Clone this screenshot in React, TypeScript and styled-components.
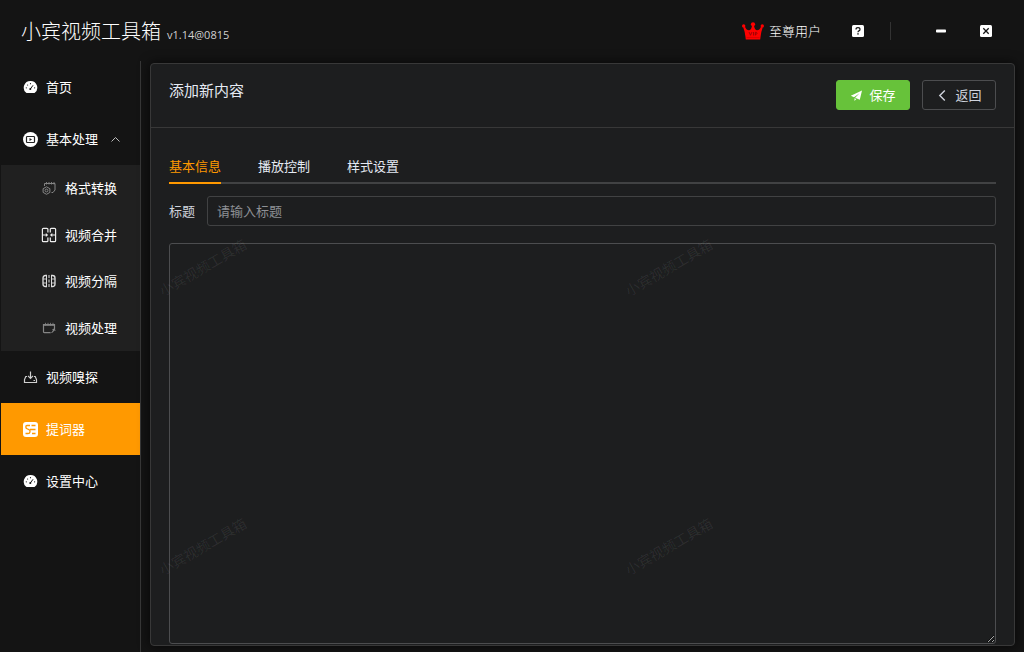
import React from 'react';
import styled, { createGlobalStyle, css } from 'styled-components';

const GlobalStyle = createGlobalStyle`
  *, *::before, *::after { box-sizing: border-box; }
  html { color-scheme: dark; }
  body {
    margin: 0;
    background: #141414;
    color: #fff;
    font-family: "Open Sans", "Noto Sans CJK SC", sans-serif;
    font-size: 13px;
    line-height: 20px;
  }
  button, input, textarea { font: inherit; color: inherit; }
  button { cursor: pointer; }
  svg { display: block; flex: none; }
`;

const Shell = styled.div`
  display: flex;
  flex-direction: column;
  height: 100vh;
`;

const TitleBar = styled.header`
  display: flex;
  align-items: center;
  justify-content: space-between;
  flex: none;
  height: 61px;
  padding: 0 32px 0 21px;
`;

const Brand = styled.div`
  display: flex;
  align-items: baseline;
  gap: 6px;
  padding-top: 3px;
`;

const BrandName = styled.h1`
  margin: 0;
  font-size: 20px;
  font-weight: 300;
  line-height: 28px;
`;

const Version = styled.span`
  font-size: 11px;
  color: #d0d0d0;
`;

const WindowTools = styled.div`
  display: flex;
  align-items: center;
`;

const UserBadge = styled.a`
  display: flex;
  align-items: center;
  gap: 5px;
  margin-right: 31px;
  color: #fff;
  font-weight: 300;
  text-decoration: none;
`;

const ToolDivider = styled.span`
  width: 1px;
  height: 18px;
  margin: 0 45px 0 26px;
  background: #333;
`;

const IconButton = styled.button`
  padding: 0;
  border: 0;
  background: none;
  & + & { margin-left: 34px; }
`;

const Workspace = styled.div`
  display: flex;
  flex: 1;
  min-height: 0;
`;

const Sidebar = styled.nav`
  flex: none;
  width: 141px;
  padding-left: 1px;
  border-right: 1px solid #383838;
`;

const MenuItem = styled.a<{ $active?: boolean }>`
  display: flex;
  align-items: center;
  gap: 8px;
  height: 52px;
  padding-left: 22px;
  color: #fff;
  text-decoration: none;
  ${(p) => p.$active && css`background: #ff9900;`}
  & > svg:last-child:not(:first-child) { margin-left: 4px; }
`;

const SubMenu = styled.div`
  display: flex;
  flex-direction: column;
  height: 186px;
  background: #202020;
`;

const SubItem = styled.a`
  display: flex;
  align-items: center;
  flex: 1;
  gap: 8px;
  padding-left: 40px;
  color: #fff;
  text-decoration: none;
`;

const Panel = styled.main`
  display: flex;
  flex-direction: column;
  flex: 1;
  min-width: 0;
  margin: 2px 9px 6px;
  border: 1px solid #383838;
  border-radius: 4px;
  background: #1d1e1f;
  box-shadow: 0 0 12px rgba(0, 0, 0, 0.72);
`;

const PanelHeader = styled.div`
  display: flex;
  justify-content: space-between;
  align-items: flex-start;
  padding: 16px 18px 17px;
  border-bottom: 1px solid #383838;
`;

const PanelTitle = styled.h2`
  margin: 0;
  color: #e5eaf3;
  font-size: 15px;
  font-weight: 400;
  line-height: 20px;
`;

const Actions = styled.div`
  display: flex;
  gap: 12px;
`;

const ActionButton = styled.button<{ $primary?: boolean }>`
  display: flex;
  align-items: center;
  justify-content: center;
  gap: 6px;
  width: 74px;
  height: 30px;
  padding: 0;
  border: 1px solid ${(p) => (p.$primary ? '#67c23a' : '#4c4d4f')};
  border-radius: 3px;
  background: ${(p) => (p.$primary ? '#67c23a' : 'transparent')};
  color: ${(p) => (p.$primary ? '#fff' : '#cfd3dc')};
`;

const PanelBody = styled.div`
  position: relative;
  display: flex;
  flex-direction: column;
  flex: 1;
  min-height: 0;
  padding: 20px 18px 1px;
`;

const Tabs = styled.div`
  display: flex;
  flex: none;
  gap: 37px;
  height: 36px;
  box-shadow: inset 0 -2px #414243;
`;

const Tab = styled.button<{ $active?: boolean }>`
  padding: 2px 0 0;
  border: 0;
  border-bottom: 2px solid ${(p) => (p.$active ? '#ff9900' : 'transparent')};
  background: none;
  color: ${(p) => (p.$active ? '#ff9900' : '#e5eaf3')};
`;

const Field = styled.div`
  display: flex;
  align-items: center;
  gap: 12px;
  margin: 12px 0 17px;
`;

const FieldLabel = styled.label`
  color: #cfd3dc;
`;

const TextInput = styled.input`
  flex: 1;
  min-width: 0;
  height: 30px;
  padding: 0 9px;
  border: 1px solid #414243;
  border-radius: 3px;
  background: transparent;
  outline: none;
  &::placeholder { color: #8d9095; opacity: 1; }
`;

const ScriptArea = styled.textarea`
  flex: 1;
  width: 100%;
  min-height: 0;
  padding: 5px 10px;
  border: 1px solid #4c4d4f;
  border-radius: 3px;
  background: transparent;
  outline: none;
  resize: vertical;
`;

const WatermarkLayer = styled.div`
  position: absolute;
  inset: 0;
  display: grid;
  grid-template-columns: repeat(2, 466px);
  grid-auto-rows: 279px;
  overflow: hidden;
  pointer-events: none;
`;

const Watermark = styled.span`
  display: flex;
  align-items: center;
  padding-left: 3px;
  color: rgba(255, 255, 255, 0.07);
  font-size: 14px;
  & > span { transform: rotate(-30deg); }
`;

const GaugeIcon = () => (
  <svg width="15" height="15" viewBox="0 0 15 15">
    <path d="M7.5 1A6.6 6.6 0 0 0 3.2 12.7Q3.6 13 4 13H11Q11.4 13 11.8 12.7A6.6 6.6 0 0 0 7.5 1Z" fill="#fff" />
    <path d="M7.3 9 9.8 5.6" stroke="#141414" strokeWidth="1" strokeLinecap="round" />
    <g fill="#141414">
      <circle cx="7.3" cy="9" r="1" /><circle cx="3.3" cy="7.8" r=".6" />
      <circle cx="4.6" cy="5" r=".6" /><circle cx="7.5" cy="3.7" r=".6" /><circle cx="11.6" cy="7.8" r=".6" />
    </g>
  </svg>
);

const FilmDiscIcon = () => (
  <svg width="15" height="15" viewBox="0 0 15 15">
    <circle cx="7.5" cy="7.5" r="7.5" fill="#fff" />
    <rect x="3.500" y="4.500" width="8" height="6" rx=".8" fill="none" stroke="#222" strokeWidth="1.200" />
    <path d="M6.500 6 9 7.500 6.500 9Z" fill="#222" />
  </svg>
);

const ChevronUp = () => (
  <svg width="11" height="11" viewBox="0 0 11 11" fill="none" stroke="#bbb">
    <path d="M1.500 7.500 5.500 3.500 9.500 7.500" />
  </svg>
);

const ConvertIcon = () => (
  <svg width="16" height="16" viewBox="0 0 16 16" fill="none" stroke="#858585">
    <path d="M3.500 6V3.500H14V10L12 12.500H10.500" />
    <path d="M5.500 2V4.500M8 2V4.500M10.500 2V4.500M13 2V4.500" strokeWidth=".9" />
    <path d="m5.500 6.800 3.400 1.900v3.700L5.500 14.300 2.100 12.400V8.700Z" />
    <circle cx="5.500" cy="10.500" r="1.400" />
  </svg>
);

const MergeIcon = () => (
  <svg width="16" height="16" viewBox="0 0 16 16" fill="none" stroke="#eee" strokeWidth="1.200">
    <path d="M6.900 5.500V2.300Q6.900 1.300 5.900 1.300H2.400Q1.400 1.300 1.400 2.300V13.700Q1.400 14.700 2.400 14.700H5.900Q6.900 14.700 6.900 13.700V10.500" />
    <path d="M9.300 5.500V2.300Q9.300 1.300 10.300 1.300H13.600Q14.600 1.300 14.600 2.300V13.700Q14.600 14.700 13.600 14.700H10.300Q9.300 14.700 9.300 13.700V10.500" />
    <path d="M1.400 8H5.500M14.600 8H10.500" />
    <path d="m4.800 6 2.400 2-2.400 2ZM11.300 6 8.900 8l2.400 2Z" fill="#eee" stroke="none" />
  </svg>
);

const SplitIcon = () => (
  <svg width="16" height="16" viewBox="0 0 16 16" fill="none" stroke="#ddd">
    <path d="M6 2.500H4.500Q2 2.500 2 5V11Q2 13.500 4.500 13.500H6M10 2.500H11.500Q14 2.500 14 5V11Q14 13.500 11.500 13.500H10" strokeWidth="1.300" />
    <path d="M5.500 2.500V13.500M10.500 2.500V13.500" />
    <path d="M2 6H5.500M2 10H5.500M10.500 6H14M10.500 10H14" strokeWidth=".9" />
    <path d="M8 2V14" strokeDasharray="3 1.500" />
  </svg>
);

const ProcessIcon = () => (
  <svg width="16" height="16" viewBox="0 0 16 16" fill="none" stroke="#858585">
    <path d="M9.500 12.700H3.500Q2.500 12.700 2.500 11.700V4.500H13.500V9.500" strokeWidth="1.200" />
    <path d="M2.500 5.500H13.500M4.500 2.800V5.500M7 2.800V5.500M9.500 2.800V5.500M12 2.800V5.500" strokeWidth=".8" />
    <path d="M9 13.200Q11.200 12.600 12 10L10.800 9.800 13.500 8.200 14.700 11 13.400 10.600Q12.300 13.200 9 13.200Z" fill="#858585" stroke="none" />
  </svg>
);

const SniffIcon = () => (
  <svg width="15" height="15" viewBox="0 0 15 15" fill="none" stroke="#d0d0d0" strokeWidth="1.200">
    <path d="M7.500 1.500V8M5 5.800 7.500 8.300 10 5.800" />
    <path d="M4 6.500H2.800L1.500 9.500V12.500H13.500V9.500L12.200 6.500H11M10.500 10.500H12" />
  </svg>
);

const PrompterIcon = () => (
  <svg width="15" height="15" viewBox="0 0 15 15" fill="none" stroke="#ff9900" strokeWidth="1.300">
    <rect width="15" height="15" rx="3" fill="#fff" stroke="none" />
    <path d="M7 3.500H4Q2.800 3.500 2.800 5 2.800 6.500 4.500 7L6 7.700Q7.300 8.200 7 9.800 6.700 11.500 5 11.500H2.500" />
    <path d="M8.500 3.500H12.500M7 7.500H12.500M9 11.500H12.500" />
  </svg>
);

const CrownIcon = () => (
  <svg width="22" height="18" viewBox="0 0 22 18" fill="#f00">
    <path d="M3.800 17.500 3.400 14.500Q3 10 1.300 5.500L3 4.800Q4.500 8.500 7.200 8.300 9.500 7.500 10 3.500H12Q12.500 7.500 14.800 8.300 17.500 8.500 19 4.800L20.700 5.500Q19 10 18.600 14.500L18.200 17.500Z" />
    <circle cx="1.700" cy="4" r="1.700" /><circle cx="11" cy="2.300" r="2.100" /><circle cx="20.300" cy="4" r="1.700" />
    <path d="M7 10 8.500 13.300 10 10M11.500 10V13.500M13.300 13.500V10.300H14.500Q15.700 11.300 14.500 12.200H13.300" fill="none" stroke="#8a0505" strokeWidth=".8" />
    <path d="M4.500 15.500H17.500" stroke="#c00000" strokeWidth=".5" />
  </svg>
);

const HelpIcon = () => (
  <svg width="12" height="12" viewBox="0 0 12 12">
    <rect width="12" height="12" rx="1.500" fill="#fff" />
    <path d="M4 4.500Q4 2.700 6 2.700T8 4.400Q8 5.400 6.900 5.900 6 6.300 6 7.200" fill="none" stroke="#141414" strokeWidth="1.200" />
    <rect x="5.300" y="8.200" width="1.400" height="1.400" fill="#141414" />
  </svg>
);

const MinimizeIcon = () => (
  <svg width="10" height="12" viewBox="0 0 10 12"><rect y="4.500" width="10" height="3" rx=".8" fill="#fff" /></svg>
);

const CloseIcon = () => (
  <svg width="12" height="12" viewBox="0 0 12 12">
    <rect width="12" height="12" rx="1.500" fill="#fff" />
    <path d="m3.300 3.300 5.400 5.400M8.700 3.300 3.300 8.700" stroke="#141414" strokeWidth="1.300" />
  </svg>
);

const SendIcon = () => (
  <svg width="13" height="13" viewBox="0 0 13 13" fill="#fff">
    <path d="M12 1.500.800 6.800 4 8.200 9.500 4.300 5.200 8.800 9.800 10.800Z" />
    <path d="M4.500 9.200V12L6.300 10Z" />
  </svg>
);

const BackIcon = () => (
  <svg width="13" height="13" viewBox="0 0 13 13" fill="none" stroke="#cfd3dc" strokeWidth="1.400">
    <path d="M8.800 1.500 3.800 6.500 8.800 11.500" />
  </svg>
);

const subItems = [
  { label: '格式转换', Icon: ConvertIcon },
  { label: '视频合并', Icon: MergeIcon },
  { label: '视频分隔', Icon: SplitIcon },
  { label: '视频处理', Icon: ProcessIcon },
];

const tabs = ['基本信息', '播放控制', '样式设置'];

export default function App() {
  const [tab, setTab] = React.useState(0);
  return (
    <Shell>
      <GlobalStyle />
      <TitleBar>
        <Brand>
          <BrandName>小宾视频工具箱</BrandName>
          <Version>v1.14@0815</Version>
        </Brand>
        <WindowTools>
          <UserBadge href="#user"><CrownIcon />至尊用户</UserBadge>
          <IconButton aria-label="帮助"><HelpIcon /></IconButton>
          <ToolDivider />
          <IconButton aria-label="最小化"><MinimizeIcon /></IconButton>
          <IconButton aria-label="关闭"><CloseIcon /></IconButton>
        </WindowTools>
      </TitleBar>
      <Workspace>
        <Sidebar>
          <MenuItem href="#home"><GaugeIcon />首页</MenuItem>
          <MenuItem href="#basic"><FilmDiscIcon />基本处理<ChevronUp /></MenuItem>
          <SubMenu>
            {subItems.map(({ label, Icon }) => (
              <SubItem key={label} href="#basic"><Icon />{label}</SubItem>
            ))}
          </SubMenu>
          <MenuItem href="#sniff"><SniffIcon />视频嗅探</MenuItem>
          <MenuItem href="#prompter" $active><PrompterIcon />提词器</MenuItem>
          <MenuItem href="#settings"><GaugeIcon />设置中心</MenuItem>
        </Sidebar>
        <Panel>
          <PanelHeader>
            <PanelTitle>添加新内容</PanelTitle>
            <Actions>
              <ActionButton $primary><SendIcon />保存</ActionButton>
              <ActionButton><BackIcon />返回</ActionButton>
            </Actions>
          </PanelHeader>
          <PanelBody>
            <Tabs role="tablist">
              {tabs.map((label, i) => (
                <Tab key={label} role="tab" aria-selected={i === tab} $active={i === tab} onClick={() => setTab(i)}>
                  {label}
                </Tab>
              ))}
            </Tabs>
            <Field>
              <FieldLabel htmlFor="title">标题</FieldLabel>
              <TextInput id="title" placeholder="请输入标题" />
            </Field>
            <ScriptArea aria-label="内容" />
            <WatermarkLayer aria-hidden="true">
              {[0, 1, 2, 3].map((n) => (
                <Watermark key={n}><span>小宾视频工具箱</span></Watermark>
              ))}
            </WatermarkLayer>
          </PanelBody>
        </Panel>
      </Workspace>
    </Shell>
  );
}
